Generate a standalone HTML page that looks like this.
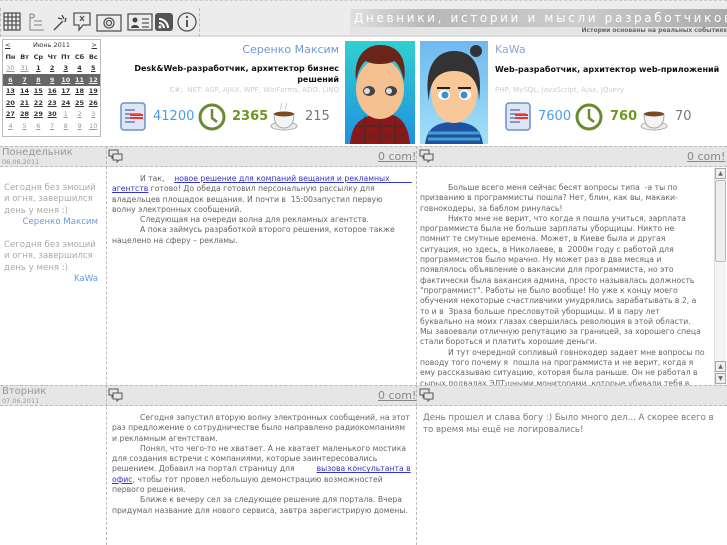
<!DOCTYPE html>
<html><head><meta charset="utf-8"><style>
*{margin:0;padding:0;box-sizing:border-box}
body{width:727px;height:545px;overflow:hidden;background:#fff;font-family:"DejaVu Sans","Liberation Sans",sans-serif;position:relative;color:#666}
.a{position:absolute}
.top{left:0;top:0;width:727px;height:37px;background:#ececec;border-top:1px dashed #ccc;border-bottom:2px solid #ddd}
.ic{top:8px;height:29px;border-left:1px dashed #bbb;border-right:1px dashed #bbb}
.title{left:350px;top:9px;width:377px;height:18px;background:linear-gradient(90deg,#e0e0e0,#b8b8b8 20%,#ccc 60%,#aaa);color:#fff;font-size:12px;letter-spacing:2.65px;padding-left:4px;line-height:18px;white-space:nowrap;overflow:hidden}
.sub{left:350px;top:27px;width:377px;height:8px;font-size:6px;font-weight:bold;color:#666;text-align:right;line-height:8px;background:#e4e4e4}
.cal{left:2px;top:39px;width:99px;height:98px;border:1px solid #bbb;font-size:6.5px;font-weight:bold;color:#333}
.cal table{border-collapse:collapse;width:97px}
.cal td{text-align:center;height:11.5px;text-decoration:underline}
.hd{background:#e6e6e6;border-top:1px dashed #bbb;border-bottom:1px dashed #bbb}
.ds{font-size:10px;color:#999}
.dd{font-size:6.5px;color:#999}
.com{font-size:11px;color:#888;text-decoration:underline}
.txt{font-size:7.7px;line-height:10.3px;color:#666;white-space:nowrap}
.txt a{color:#33c;text-decoration:underline}
.ind{display:inline-block;width:28px}
.vl{border-left:1px dashed #bbb}
.lt{font-size:8.6px;line-height:11.3px;color:#aaa;width:100px;white-space:nowrap}
</style></head><body>
<div class="a top"></div>
<div class="a ic" style="left:0;width:200px"></div>
<svg class="a" style="left:0;top:8px" width="200" height="29">
<g stroke="#555" fill="none" stroke-width="1.3">
<rect x="4" y="5" width="16" height="17"/><path d="M4 9h16M4 13h16M4 17h16M8 5v17M12 5v17M16 5v17"/>
<path d="M30 6c6 0 6 4 0 4M30 6v16h14M34 13h8M34 17h8" stroke="#999"/>
<path d="M54 22l9-9M62 7l2 4M58 10l4 1M66 10l-1 4" stroke="#444"/>
<path d="M74 5h16v12h-7l-4 5v-5h-5z"/><path d="M80 8l4 5M84 8l-4 5"/>
<rect x="97" y="7" width="24" height="16"/><circle cx="109" cy="15" r="5"/><circle cx="109" cy="15" r="2.5"/>
<rect x="128" y="6" width="24" height="16"/><path d="M142 11h7M142 15h7M142 19h7"/>
</g>
<circle cx="135" cy="12" r="2.5" fill="#444"/><path d="M131 20c0-4 8-4 8 0z" fill="#444"/>
<rect x="155" y="5" width="18" height="18" rx="3" fill="#555"/><g stroke="#fff" fill="none" stroke-width="2"><path d="M159 11a9 9 0 0 1 9 9M159 15a5 5 0 0 1 5 5"/></g><circle cx="160" cy="19" r="1.5" fill="#fff"/>
<circle cx="187" cy="14" r="9" fill="none" stroke="#555" stroke-width="1.3"/><path d="M187 12v7" stroke="#555" stroke-width="2"/><circle cx="187" cy="9" r="1.2" fill="#555"/>
</svg>
<div class="a title">Дневники, истории и мысли разработчиков</div>
<div class="a sub">Истории основаны на реальных событиях</div>

<div class="a cal">
<div style="height:11px;line-height:11px;text-align:center;font-weight:normal;position:relative"><span style="position:absolute;left:2px;text-decoration:underline">&lt;</span>Июнь 2011<span style="position:absolute;right:3px;text-decoration:underline">&gt;</span></div>
<table>
<tr><td style="text-decoration:none">Пн</td><td style="text-decoration:none">Вт</td><td style="text-decoration:none">Ср</td><td style="text-decoration:none">Чт</td><td style="text-decoration:none">Пт</td><td style="text-decoration:none">Сб</td><td style="text-decoration:none">Вс</td></tr>
<tr style="color:#999;font-weight:normal"><td>30</td><td>31</td><td style="color:#333;font-weight:bold">1</td><td style="color:#333;font-weight:bold">2</td><td style="color:#333;font-weight:bold">3</td><td style="color:#333;font-weight:bold">4</td><td style="color:#333;font-weight:bold">5</td></tr>
<tr style="background:#666;color:#eee"><td>6</td><td>7</td><td>8</td><td>9</td><td>10</td><td>11</td><td>12</td></tr>
<tr><td>13</td><td>14</td><td>15</td><td>16</td><td>17</td><td>18</td><td>19</td></tr>
<tr><td>20</td><td>21</td><td>22</td><td>23</td><td>24</td><td>25</td><td>26</td></tr>
<tr><td>27</td><td>28</td><td>29</td><td>30</td><td style="color:#999;font-weight:normal">1</td><td style="color:#999;font-weight:normal">2</td><td style="color:#999;font-weight:normal">3</td></tr>
<tr style="color:#999;font-weight:normal"><td>4</td><td>5</td><td>6</td><td>7</td><td>8</td><td>9</td><td>10</td></tr>
</table></div>

<div class="a" style="left:150px;top:43px;width:189px;text-align:right;font-size:11px;color:#6a9ad8">Серенко Максим</div>
<div class="a" style="left:120px;top:64px;width:219px;text-align:right;font-size:8px;font-weight:bold;color:#111;line-height:10.5px">Desk&amp;Web-разработчик, архитектор бизнес решений</div>
<div class="a" style="left:120px;top:86px;width:219px;text-align:right;font-size:7px;color:#ccc">C#; .NET: ASP, AJAX, WPF, WinForms, ADO, LINQ</div>
<div class="a" style="left:495px;top:43px;font-size:11px;color:#8aa8d8">KaWa</div>
<div class="a" style="left:495px;top:65px;font-size:8px;font-weight:bold;color:#111">Web-разработчик, архитектор web-приложений</div>
<div class="a" style="left:495px;top:86px;font-size:7px;color:#ccc">PHP, MySQL, JavaScript, Ajax, JQuery</div>

<svg class="a" style="left:118px;top:100px" width="230" height="32">
<rect x="3" y="3" width="24" height="27" rx="3" fill="#dde6f4" stroke="#6b8fd0" stroke-width="1.5"/><path d="M7 10h10M7 14h16M7 18h16M7 22h10" stroke="#2b4a90"/><path d="M12 15h13M12 18h13" stroke="#e33" stroke-width="2"/>
<circle cx="94" cy="17" r="12" fill="none" stroke="#6a8a30" stroke-width="3"/><path d="M94 9v9l5 4" stroke="#6a8a30" stroke-width="2.5" fill="none"/>
<ellipse cx="166" cy="26" rx="13" ry="4" fill="#eee" stroke="#aaa"/><path d="M156 14h20c0 10-4 14-10 14s-10-4-10-14z" fill="#f4f4f4" stroke="#aaa"/><ellipse cx="166" cy="14" rx="10" ry="2.5" fill="#7a4a20"/><path d="M163 10c-2-3 2-4 0-7M168 10c-2-3 2-4 0-7" stroke="#ccc" fill="none"/>
</svg>
<div class="a" style="left:153px;top:109px;font-size:13px;color:#4a9ce8">41200</div>
<div class="a" style="left:232px;top:109px;font-size:13px;color:#6a9a20;font-weight:bold">2365</div>
<div class="a" style="left:305px;top:109px;font-size:13px;color:#777">215</div>

<svg class="a" style="left:500px;top:100px" width="200" height="32">
<rect x="6" y="3" width="24" height="27" rx="3" fill="#dde6f4" stroke="#6b8fd0" stroke-width="1.5"/><path d="M10 10h10M10 14h16M10 18h16M10 22h10" stroke="#2b4a90"/><path d="M15 15h13M15 18h13" stroke="#e33" stroke-width="2"/>
<circle cx="89" cy="17" r="12" fill="none" stroke="#6a8a30" stroke-width="3"/><path d="M89 9v9l5 4" stroke="#6a8a30" stroke-width="2.5" fill="none"/>
<ellipse cx="154" cy="26" rx="13" ry="4" fill="#eee" stroke="#aaa"/><path d="M144 14h20c0 10-4 14-10 14s-10-4-10-14z" fill="#f4f4f4" stroke="#aaa"/><ellipse cx="154" cy="14" rx="10" ry="2.5" fill="#7a4a20"/>
</svg>
<div class="a" style="left:538px;top:109px;font-size:13px;color:#4a9ce8">7600</div>
<div class="a" style="left:610px;top:109px;font-size:13px;color:#6a9a20;font-weight:bold">760</div>
<div class="a" style="left:675px;top:109px;font-size:13px;color:#777">70</div>

<svg class="a" style="left:345px;top:41px" width="70" height="103">
<defs><linearGradient id="bg1" x1="0" y1="0" x2="0" y2="1"><stop offset="0" stop-color="#30d0d0"/><stop offset="1" stop-color="#2090e0"/></linearGradient></defs>
<rect width="70" height="103" fill="url(#bg1)"/>
<path d="M5 103c2-20 10-28 30-30s28 10 30 30z" fill="#8a1818"/>
<path d="M10 85h50M10 95h50M20 75v28M35 75v28M50 75v28" stroke="#333" stroke-width="2" opacity=".5"/>
<ellipse cx="35" cy="48" rx="24" ry="30" fill="#f4c090"/>
<path d="M11 40c-3-25 10-36 24-36s28 8 24 36c-2-10-6-18-10-20-6 4-22 4-28 0-4 2-8 10-10 20z" fill="#6b2418"/>
<ellipse cx="24" cy="50" rx="6" ry="5" fill="#444"/><ellipse cx="46" cy="50" rx="6" ry="5" fill="#444"/>
<ellipse cx="22" cy="50" rx="3" ry="3" fill="#ddd"/><ellipse cx="44" cy="50" rx="3" ry="3" fill="#ddd"/>
</svg>
<svg class="a" style="left:420px;top:41px" width="68" height="103">
<defs><linearGradient id="bg2" x1="0" y1="0" x2="0" y2="1"><stop offset="0" stop-color="#70b8f0"/><stop offset="1" stop-color="#a0e0f8"/></linearGradient></defs>
<rect width="68" height="103" fill="url(#bg2)"/>
<path d="M5 103c2-15 10-22 29-22s27 7 29 22z" fill="#2050a0"/>
<path d="M8 92h52M8 98h52" stroke="#40a0d0" stroke-width="3"/>
<ellipse cx="34" cy="52" rx="23" ry="30" fill="#f8c898"/>
<path d="M9 60c-6-35 8-50 25-50s30 12 25 50c0-16-6-30-25-30s-25 14-25 30z" fill="#333"/>
<circle cx="56" cy="10" r="6" fill="#333"/>
<ellipse cx="24" cy="54" rx="6" ry="5" fill="#fff"/><ellipse cx="45" cy="54" rx="6" ry="5" fill="#fff"/>
<circle cx="25" cy="54" r="3.5" fill="#3a90d0"/><circle cx="44" cy="54" r="3.5" fill="#3a90d0"/>
<path d="M17 47h13M38 47h13" stroke="#222" stroke-width="2"/>
</svg>

<!-- row 1 -->
<div class="a hd" style="left:0;top:146px;width:727px;height:21px"></div>
<div class="a ds" style="left:2px;top:147px">Понедельник</div>
<div class="a dd" style="left:2px;top:158px">06.06.2011</div>
<div class="a vl" style="left:106px;top:146px;height:399px"></div>
<div class="a vl" style="left:416px;top:146px;height:399px"></div>
<svg class="a" style="left:108px;top:149px" width="16" height="14"><g fill="none" stroke="#555"><path d="M1 1h9v6h-4l-2 2v-2h-3z"/><path d="M5 5h9v6h-3l-2 2v-2h-4z" fill="#e6e6e6"/></g></svg>
<svg class="a" style="left:419px;top:149px" width="16" height="14"><g fill="none" stroke="#555"><path d="M1 1h9v6h-4l-2 2v-2h-3z"/><path d="M5 5h9v6h-3l-2 2v-2h-4z" fill="#e6e6e6"/></g></svg>
<div class="a com" style="left:378px;top:150px">0 com!</div>
<div class="a com" style="left:687px;top:150px">0 com!</div>

<div class="a lt" style="left:4px;top:183px">Сегодня без эмоций<br>и огня, завершился<br>день у меня :)<div style="text-align:right;color:#6a9ad8;padding-right:6px">Серенко Максим</div></div>
<div class="a lt" style="left:4px;top:240px">Сегодня без эмоций<br>и огня, завершился<br>день у меня :)<div style="text-align:right;color:#6a9ad8;padding-right:6px">KaWa</div></div>

<div class="a txt" style="left:112px;top:174px"><span class="ind"></span>И так, &nbsp;&nbsp;&nbsp;<a>новое решение для компаний вещания и рекламных&nbsp;&nbsp;&nbsp;&nbsp;&nbsp;&nbsp;&nbsp;&nbsp;&nbsp;</a><br><a>агентств</a> готово! До обеда готовил персональную рассылку для<br>владельцев площадок вещания. И почти в &nbsp;15:00запустил первую<br>волну электронных сообщений.<br><span class="ind"></span>Следующая на очереди волна для рекламных агентств.<br><span class="ind"></span>А пока займусь разработкой второго решения, которое также<br>нацелено на сферу – рекламы.</div>

<div class="a txt" style="left:420px;top:183px;width:293px;height:202px;overflow:hidden"><span class="ind"></span>Больше всего меня сейчас бесят вопросы типа &nbsp;-а ты по<br>призванию в программисты пошла? Нет, блин, как вы, макаки-<br>говнокодеры, за баблом ринулась!<br><span class="ind"></span>Никто мне не верит, что когда я пошла учиться, зарплата<br>программиста была не больше зарплаты уборщицы. Никто не<br>помнит те смутные времена. Может, в Киеве была и другая<br>ситуация, но здесь, в Николаеве, в &nbsp;2000м году с работой для<br>программистов было мрачно. Ну может раз в два месяца и<br>появлялось объявление о вакансии для программиста, но это<br>фактически была вакансия админа, просто называлась должность<br>"программист". Работы не было вообще! Но уже к концу моего<br>обучения некоторые счастливчики умудрялись зарабатывать в 2, а<br>то и в &nbsp;3раза больше пресловутой уборщицы. И в пару лет<br>буквально на моих глазах свершилась революция в этой области.<br>Мы завоевали отличную репутацию за границей, за хорошего спеца<br>стали бороться и платить хорошие деньги.<br><span class="ind"></span>И тут очередной сопливый говнокодер задает мне вопросы по<br>поводу того почему я &nbsp;пошла на программиста и не верит, когда я<br>ему рассказываю ситуацию, которая была раньше. Он не работал в<br>сырых подвалах ЭЛТшными мониторами, которые убивали тебя в</div>
<div class="a" style="left:714px;top:168px;width:12px;height:217px;background:#f4f4f4;border-left:1px solid #ddd"></div>
<div class="a" style="left:715px;top:168px;width:11px;height:11px;background:#eee;border:1px solid #aaa;font-size:6px;text-align:center;line-height:9px">▲</div>
<div class="a" style="left:715px;top:180px;width:11px;height:82px;background:#eee;border:1px solid #bbb;border-radius:2px"></div>
<div class="a" style="left:715px;top:361px;width:11px;height:11px;background:#eee;border:1px solid #aaa;font-size:6px;text-align:center;line-height:9px">▲</div>
<div class="a" style="left:715px;top:373px;width:11px;height:11px;background:#eee;border:1px solid #aaa;font-size:6px;text-align:center;line-height:9px">▼</div>

<!-- row 2 -->
<div class="a hd" style="left:0;top:385px;width:727px;height:21px"></div>
<div class="a vl" style="left:106px;top:385px;height:21px"></div>
<div class="a vl" style="left:416px;top:385px;height:21px"></div>
<div class="a ds" style="left:2px;top:386px">Вторник</div>
<div class="a dd" style="left:2px;top:397px">07.06.2011</div>
<svg class="a" style="left:108px;top:388px" width="16" height="14"><g fill="none" stroke="#555"><path d="M1 1h9v6h-4l-2 2v-2h-3z"/><path d="M5 5h9v6h-3l-2 2v-2h-4z" fill="#e6e6e6"/></g></svg>
<svg class="a" style="left:419px;top:388px" width="16" height="14"><g fill="none" stroke="#555"><path d="M1 1h9v6h-4l-2 2v-2h-3z"/><path d="M5 5h9v6h-3l-2 2v-2h-4z" fill="#e6e6e6"/></g></svg>
<div class="a com" style="left:378px;top:389px">0 com!</div>

<div class="a txt" style="left:112px;top:413px"><span class="ind"></span>Сегодня запустил вторую волну электронных сообщений, на этот<br>раз предложение о сотрудничестве было направлено радиокомпаниям<br>и рекламным агентствам.<br><span class="ind"></span>Понял, что чего-то не хватает. А не хватает маленького мостика<br>для создания встречи с компаниями, которые заинтересовались<br>решением. Добавил на портал страницу для &nbsp;&nbsp;&nbsp;&nbsp;&nbsp;&nbsp;&nbsp;&nbsp;<a>вызова консультанта в</a><br><a>офис</a>, чтобы тот провел небольшую демонстрацию возможностей<br>первого решения.<br><span class="ind"></span>Ближе к вечеру сел за следующее решение для портала. Вчера<br>придумал название для нового сервиса, завтра зарегистрирую домены.</div>
<div class="a" style="left:423px;top:412px;width:300px;font-size:8.6px;line-height:12px;color:#777">День прошел и слава богу :) Было много дел... А скорее всего в то время мы ещё не логировались!</div>
</body></html>
